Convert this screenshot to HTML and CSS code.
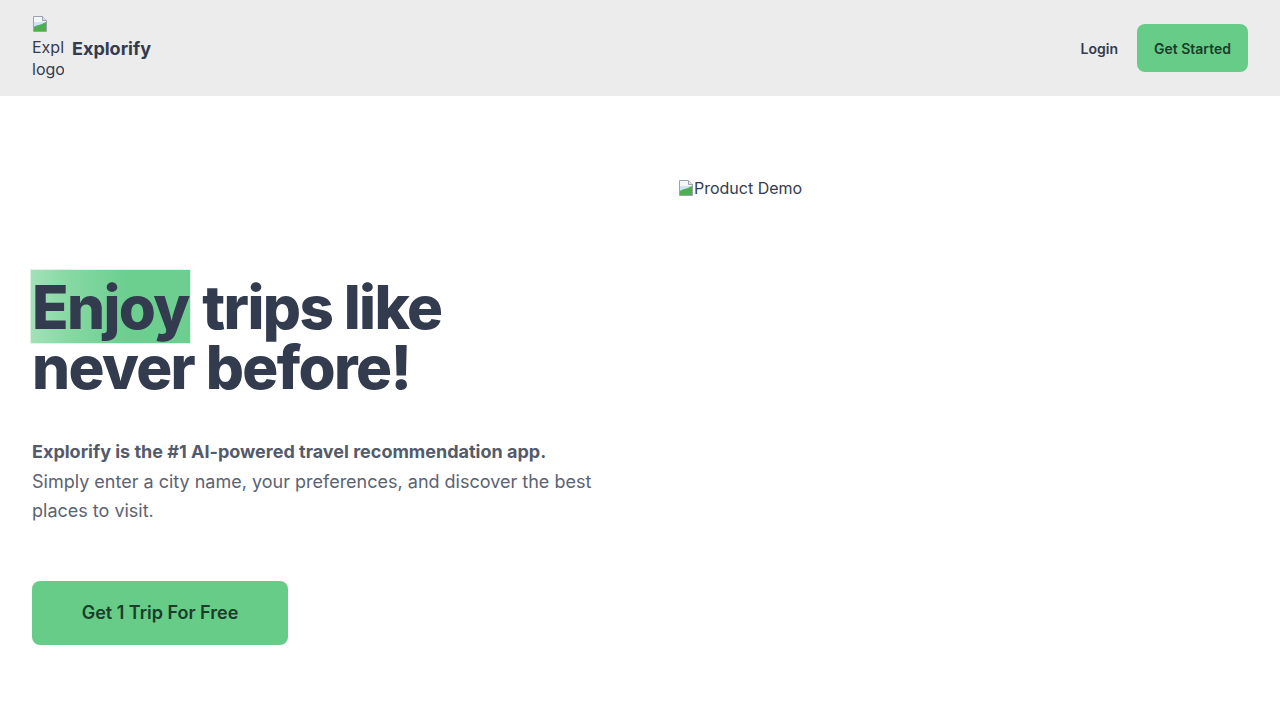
FILE: index.html
```html
<!DOCTYPE html>
<html lang="en">
<head>
    <meta charset="UTF-8">
    <meta name="viewport" content="width=device-width, initial-scale=1.0">
    <title>Explorify - AI travel recommendations</title>
    <link rel="stylesheet" href="styles.css">
</head>
<body>
    <header class="navbar">
        <a class="brand" href="#">
            <span class="broken-img logo-img">
                <svg class="broken-icon" width="16" height="16" viewBox="0 0 16 16" aria-hidden="true">
                    <path d="M1.5 0.5h9l4 4v11h-13z" fill="#f4f6f8" stroke="#9aa3ad"/>
                    <path d="M10.5 0.5v4h4" fill="#dfe3e7" stroke="#9aa3ad"/>
                    <path d="M2 6h12v9H2z" fill="#cfe3f5"/>
                    <path d="M2 15v-4c3-2.5 6-1.5 12-5V15z" fill="#4caf50"/>
                </svg>
                Explorify logo
            </span>
            <span class="brand-name">Explorify</span>
        </a>
        <nav class="nav-actions">
            <a class="nav-link" href="#">Login</a>
            <a class="btn btn-small" href="#">Get Started</a>
        </nav>
    </header>

    <main class="hero">
        <div class="hero-text">
            <h1><span class="highlight">Enjoy</span> trips like<br>never before!</h1>
            <p class="lead">
                <strong>Explorify is the #1 AI-powered travel recommendation app.</strong><br>
                Simply enter a city name, your preferences, and discover the best places to visit.
            </p>
            <a class="btn btn-large" href="#">Get 1 Trip For Free</a>
        </div>

        <div class="hero-demo">
            <span class="broken-img">
                <svg class="broken-icon" width="16" height="16" viewBox="0 0 16 16" aria-hidden="true">
                    <path d="M1.5 0.5h9l4 4v11h-13z" fill="#f4f6f8" stroke="#9aa3ad"/>
                    <path d="M10.5 0.5v4h4" fill="#dfe3e7" stroke="#9aa3ad"/>
                    <path d="M2 6h12v9H2z" fill="#cfe3f5"/>
                    <path d="M2 15v-4c3-2.5 6-1.5 12-5V15z" fill="#4caf50"/>
                </svg>Product Demo
            </span>
        </div>
    </main>
</body>
</html>
```

FILE: styles.css
```css
body {
    font-family: Inter, 'Noto Sans', sans-serif;
    margin: 0;
    background: #ffffff;
    color: #333b4f;
}

a {
    color: inherit;
    text-decoration: none;
}

.navbar {
    height: 96px;
    padding: 0 32px;
    background: #ececec;
    display: flex;
    align-items: center;
    justify-content: space-between;
    box-sizing: border-box;
}

.brand {
    display: flex;
    align-items: center;
    gap: 8px;
}

.broken-img {
    font-size: 16px;
    line-height: 22px;
    color: #333b4f;
}

.broken-icon {
    vertical-align: -2px;
}

/* alt text of the missing logo, squeezed into the 32px image box */
.logo-img {
    display: block;
    width: 32px;
    height: 64px;
    overflow: hidden;
}

.logo-img .broken-icon {
    display: block;
    margin-bottom: 4px;
}

.brand-name {
    font-size: 18px;
    font-weight: 700;
}

.nav-actions {
    display: flex;
    align-items: center;
    gap: 19px;
}

.nav-link {
    font-size: 14px;
    font-weight: 600;
}

.btn {
    background: #66cc88;
    color: #1b3d2a;
    font-weight: 600;
    border-radius: 8px;
    display: inline-flex;
    align-items: center;
    justify-content: center;
}

.btn-small {
    height: 48px;
    padding: 0 17px;
    font-size: 14px;
}

.btn-large {
    width: 256px;
    height: 64px;
    font-size: 18px;
}

.hero {
    display: grid;
    grid-template-columns: 1fr 1fr;
    gap: 76px;
    padding: 80px 32px 0;
}

.hero-text {
    padding-top: 101px;
}

.hero-text h1 {
    margin: 0;
    font-size: 60px;
    font-weight: 800;
    line-height: 60px;
    letter-spacing: -0.027em;
}

.highlight {
    background: linear-gradient(90deg, #a2e1b8 0%, #86d8a2 25%, #6ccf90 60%, #6ccf90 100%);
    border: 1px solid #dff3e6;
    padding: 1px 1px 0;
    margin-left: -2px;
}

.lead {
    margin: 40px 0 55px;
    font-size: 18px;
    line-height: 29.5px;
    color: #5b6374;
}

.lead strong {
    color: #535b6b;
}

.hero-demo {
    padding-top: 1px;
}
```
